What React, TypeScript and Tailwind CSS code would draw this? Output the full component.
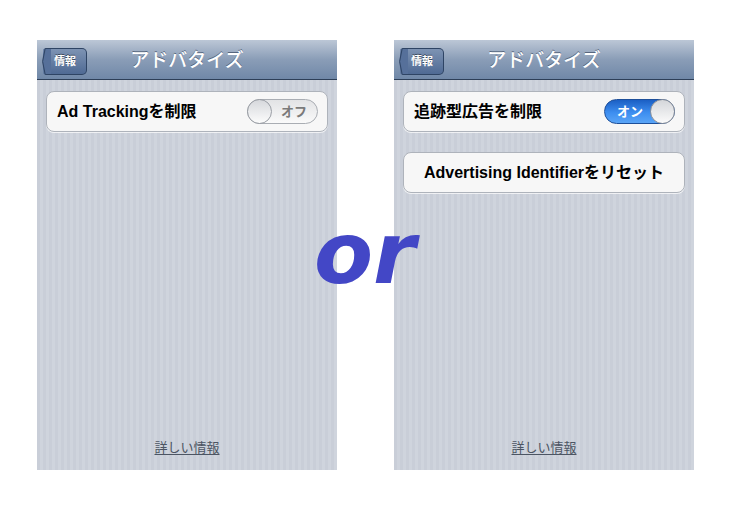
import React from "react";

const jp = "font-['Liberation_Sans','Noto_Sans_CJK_JP',sans-serif]";

function NavBar() {
  return (
    <div className="relative flex h-[40px] items-center justify-center border-b border-[#2d3f58] bg-[linear-gradient(#bcc7d6,#8a9db7_50%,#7088a8)]">
      <div className="absolute left-[5px] top-[8px] flex h-[27px] items-center">
        <svg width="10" height="27" viewBox="0 0 10 27" className="-mr-px">
          <path d="M10 0.5 L3 0.5 Q2 0.5 1.4 1.4 L0.6 13.5 L1.4 25.6 Q2 26.5 3 26.5 L10 26.5 Z" fill="#56709a" />
          <path d="M10 0.5 L3.2 0.5 L0.6 13.5 L3.2 26.5 L10 26.5" fill="none" stroke="#2e4464" />
        </svg>
        <div className="flex h-[27px] items-center rounded-r-[5px] border border-l-0 border-[#2e4464] bg-[linear-gradient(#7d93b3,#4f6a94)] pl-[3px] pr-[10px] text-[11px] font-bold text-white [text-shadow:0_-1px_0_rgba(0,0,0,0.45)]">
          情報
        </div>
      </div>
      <span className="pt-[3px] text-[19px] font-medium text-white [text-shadow:0_-1px_0_rgba(40,55,80,0.6)]">
        アドバタイズ
      </span>
    </div>
  );
}

function Toggle({ on }: { on: boolean }) {
  if (on) {
    return (
      <div className="flex h-[25px] w-[71px] items-center justify-between rounded-full border border-[#1d4f9a] bg-[linear-gradient(#1b5fc4,#3d8ef0_55%,#5aa5f7)] pl-[12px]">
        <span className="text-[13px] font-bold text-white">オン</span>
        <div className="h-[25px] w-[25px] -mr-px rounded-full border border-[#8a8f98] bg-[linear-gradient(#d4d6da,#fbfbfb)]" />
      </div>
    );
  }
  return (
    <div className="flex h-[25px] w-[71px] items-center justify-between rounded-full border border-[#a9adb3] bg-[linear-gradient(#e2e3e5,#fafafa)] pr-[10px]">
      <div className="h-[25px] w-[25px] -ml-px rounded-full border border-[#9a9ea5] bg-[linear-gradient(#d6d8dc,#fcfcfc)]" />
      <span className="text-[13px] font-bold text-[#7a7a7a]">オフ</span>
    </div>
  );
}

function Cell({ children, className = "" }: { children: React.ReactNode; className?: string }) {
  return (
    <div
      className={`flex h-[41px] items-center rounded-[8px] border border-[#aeb3bb] bg-[#f7f7f7] shadow-[0_1px_0_rgba(255,255,255,0.7)] ${className}`}
    >
      {children}
    </div>
  );
}

function Screen({ on }: { on: boolean }) {
  return (
    <div
      className={`flex h-[430px] w-[300px] flex-col bg-[#cdd2db] bg-[repeating-linear-gradient(90deg,#c9ced8_0,#c9ced8_3px,#cfd4dd_3px,#cfd4dd_6px)] ${jp}`}
    >
      <NavBar />
      <div className="flex flex-col gap-[20px] px-[9px] pt-[11px]">
        <Cell className="justify-between pl-[10px] pr-[9px]">
          <span className="text-[16px] font-bold text-black">
            {on ? "追跡型広告を制限" : "Ad Trackingを制限"}
          </span>
          <Toggle on={on} />
        </Cell>
        {on && (
          <Cell className="justify-center">
            <span className="text-[16px] font-bold text-black">Advertising Identifierをリセット</span>
          </Cell>
        )}
      </div>
      <div className="mt-auto pb-[11px] text-center">
        <span className="text-[13px] text-[#4c5563] underline underline-offset-2">詳しい情報</span>
      </div>
    </div>
  );
}

export default function App() {
  return (
    <div className="relative h-[516px] w-[735px] overflow-hidden bg-white">
      <div className="flex gap-[57px] pl-[37px] pt-[40px]">
        <Screen on={false} />
        <Screen on={true} />
      </div>
      <span className="absolute left-[314px] top-[210px] font-['DejaVu_Sans',sans-serif] text-[86px] font-bold italic leading-none text-[#4347c6]">
        or
      </span>
    </div>
  );
}
